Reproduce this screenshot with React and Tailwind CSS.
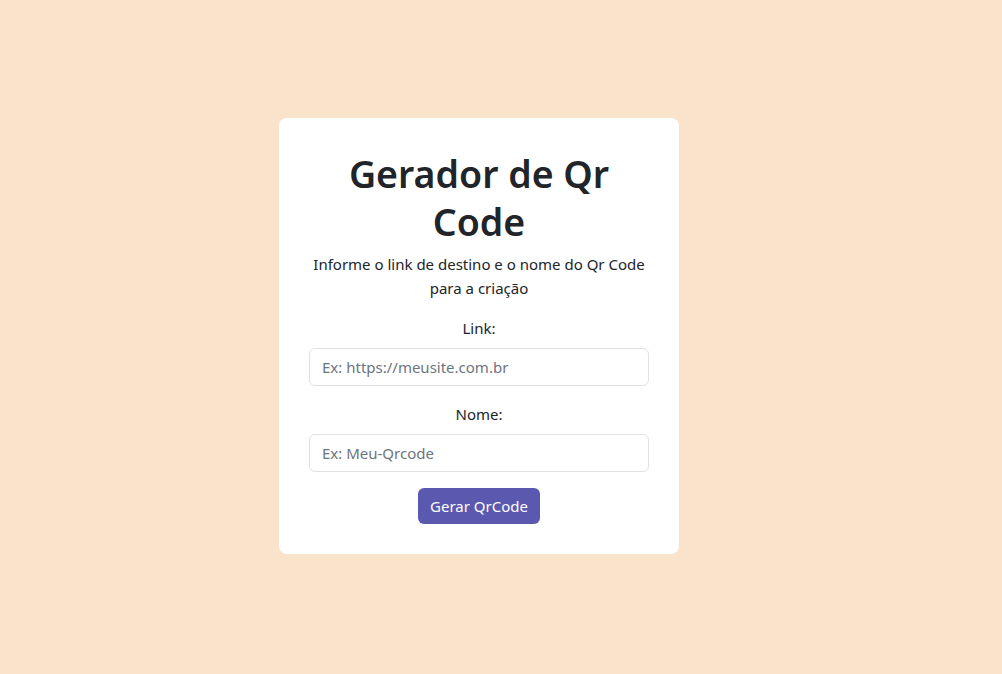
import React, { useState } from 'react';

function App() {
  const [link, setLink] = useState('');
  const [nome, setNome] = useState('');

  return (
    <div className="min-h-screen w-full bg-[#f9e4cb] flex items-center justify-center font-['Noto_Sans',sans-serif] text-[#212529]">
      <div className="w-[400px] mr-[44px] mb-[2px] bg-white rounded-lg p-[30px] flex flex-col items-center text-center">
        <h1 className="text-[37.5px] leading-[48px] font-semibold pt-[2px] mb-[6px]">Gerador de Qr Code</h1>
        <p className="text-[15px] leading-6 mb-4">Informe o link de destino e o nome do Qr Code para a criação</p>

        <label className="text-[15px] leading-6 mb-2">Link:</label>
        <input
          type="text"
          value={link}
          onChange={(e) => setLink(e.target.value)}
          placeholder="Ex: https://meusite.com.br"
          className="w-full h-[38px] px-3 border border-[#dee2e6] rounded-md text-[15px] placeholder:text-[#6c757d] focus:outline-none mb-4"
        />

        <label className="text-[15px] leading-6 mb-2">Nome:</label>
        <input
          type="text"
          value={nome}
          onChange={(e) => setNome(e.target.value)}
          placeholder="Ex: Meu-Qrcode"
          className="w-full h-[38px] px-3 border border-[#dee2e6] rounded-md text-[15px] placeholder:text-[#6c757d] focus:outline-none mb-4"
        />

        <button className="h-9 px-3 bg-[#5b58b0] text-white text-[15px] rounded-md">Gerar QrCode</button>
      </div>
    </div>
  );
}

export default App;
